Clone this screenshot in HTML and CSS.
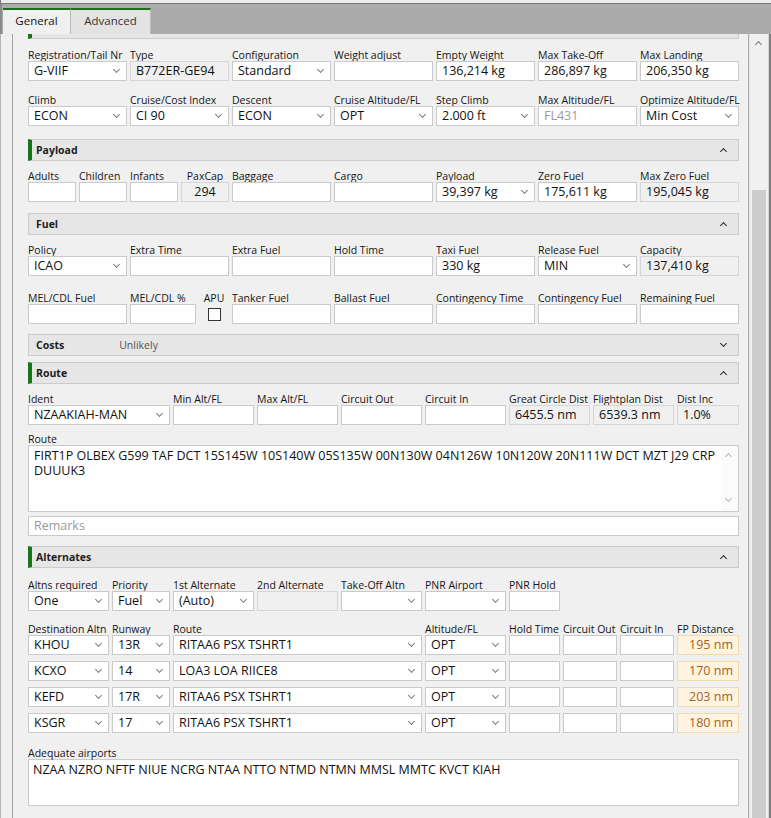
FILE: index.html
```html
<!DOCTYPE html>
<html lang="en">
<head>
    <meta charset="UTF-8">
    <title>Flight Plan - General</title>
    <link rel="stylesheet" href="styles.css">
</head>
<body>
<div class="window">
    <div class="topline"></div>
    <div class="tabbar">
        <div class="tab active">General</div>
        <div class="tab">Advanced</div>
    </div>

    <div class="frame">
        <div class="gutter"></div>
        <div class="scroller">
            <div class="content">
                <div class="section-head cut open"></div>

                <!-- Aircraft -->
                <div class="row r7 first">
                    <div class="fld"><label>Registration/Tail Nr</label><div class="box combo">G-VIIF</div></div>
                    <div class="fld"><label>Type</label><div class="box ro">B772ER-GE94</div></div>
                    <div class="fld"><label>Configuration</label><div class="box combo">Standard</div></div>
                    <div class="fld"><label>Weight adjust</label><div class="box"></div></div>
                    <div class="fld"><label>Empty Weight</label><div class="box">136,214 kg</div></div>
                    <div class="fld"><label>Max Take-Off</label><div class="box">286,897 kg</div></div>
                    <div class="fld"><label>Max Landing</label><div class="box">206,350 kg</div></div>
                </div>
                <div class="row r7 m12">
                    <div class="fld"><label>Climb</label><div class="box combo">ECON</div></div>
                    <div class="fld"><label>Cruise/Cost Index</label><div class="box combo">CI 90</div></div>
                    <div class="fld"><label>Descent</label><div class="box combo">ECON</div></div>
                    <div class="fld"><label>Cruise Altitude/FL</label><div class="box combo">OPT</div></div>
                    <div class="fld"><label>Step Climb</label><div class="box combo">2.000 ft</div></div>
                    <div class="fld"><label>Max Altitude/FL</label><div class="box dim">FL431</div></div>
                    <div class="fld"><label>Optimize Altitude/FL</label><div class="box combo">Min Cost</div></div>
                </div>

                <!-- Payload -->
                <div class="section-head open m13"><span class="title">Payload</span></div>
                <div class="row payload m8">
                    <div class="fld"><label>Adults</label><div class="box"></div></div>
                    <div class="fld"><label>Children</label><div class="box"></div></div>
                    <div class="fld"><label>Infants</label><div class="box"></div></div>
                    <div class="fld"><label class="center">PaxCap</label><div class="box ro center">294</div></div>
                    <div class="fld"><label>Baggage</label><div class="box"></div></div>
                    <div class="fld"><label>Cargo</label><div class="box"></div></div>
                    <div class="fld"><label>Payload</label><div class="box combo">39,397 kg</div></div>
                    <div class="fld"><label>Zero Fuel</label><div class="box">175,611 kg</div></div>
                    <div class="fld"><label>Max Zero Fuel</label><div class="box ro">195,045 kg</div></div>
                </div>

                <!-- Fuel -->
                <div class="section-head plain m11"><span class="title">Fuel</span></div>
                <div class="row r7 m8">
                    <div class="fld"><label>Policy</label><div class="box combo">ICAO</div></div>
                    <div class="fld"><label>Extra Time</label><div class="box"></div></div>
                    <div class="fld"><label>Extra Fuel</label><div class="box"></div></div>
                    <div class="fld"><label>Hold Time</label><div class="box"></div></div>
                    <div class="fld"><label>Taxi Fuel</label><div class="box">330 kg</div></div>
                    <div class="fld"><label>Release Fuel</label><div class="box combo">MIN</div></div>
                    <div class="fld"><label>Capacity</label><div class="box ro">137,410 kg</div></div>
                </div>
                <div class="row fuel2 m15">
                    <div class="fld"><label>MEL/CDL Fuel</label><div class="box"></div></div>
                    <div class="fld"><label>MEL/CDL %</label><div class="box"></div></div>
                    <div class="fld apu"><label>APU</label><span class="check"></span></div>
                    <div class="fld"><label>Tanker Fuel</label><div class="box"></div></div>
                    <div class="fld"><label>Ballast Fuel</label><div class="box"></div></div>
                    <div class="fld"><label>Contingency Time</label><div class="box"></div></div>
                    <div class="fld"><label>Contingency Fuel</label><div class="box"></div></div>
                    <div class="fld"><label>Remaining Fuel</label><div class="box"></div></div>
                </div>

                <!-- Costs -->
                <div class="section-head plain closed m10"><span class="title">Costs</span><span class="note">Unlikely</span></div>

                <!-- Route -->
                <div class="section-head open m6"><span class="title">Route</span></div>
                <div class="row route m8">
                    <div class="fld"><label>Ident</label><div class="box combo">NZAAKIAH-MAN</div></div>
                    <div class="fld"><label>Min Alt/FL</label><div class="box"></div></div>
                    <div class="fld"><label>Max Alt/FL</label><div class="box"></div></div>
                    <div class="fld"><label>Circuit Out</label><div class="box"></div></div>
                    <div class="fld"><label>Circuit In</label><div class="box"></div></div>
                    <div class="fld"><label>Great Circle Dist</label><div class="box ro">6455.5 nm</div></div>
                    <div class="fld"><label>Flightplan Dist</label><div class="box ro">6539.3 nm</div></div>
                    <div class="fld"><label>Dist Inc</label><div class="box ro">1.0%</div></div>
                </div>
                <div class="fld m7">
                    <label>Route</label>
                    <div class="area route-text">
                        <div class="area-text">FIRT1P OLBEX G599 TAF DCT 15S145W 10S140W 05S135W 00N130W 04N126W 10N120W 20N111W DCT MZT J29 CRP DUUUK3</div>
                        <div class="area-scroll"><span class="arrow up"></span><span class="arrow down"></span></div>
                    </div>
                </div>
                <div class="box remarks">Remarks</div>

                <!-- Alternates -->
                <div class="section-head open m10"><span class="title">Alternates</span></div>
                <div class="row altn m10">
                    <div class="fld"><label>Altns required</label><div class="box combo">One</div></div>
                    <div class="fld"><label>Priority</label><div class="box combo">Fuel</div></div>
                    <div class="fld"><label>1st Alternate</label><div class="box combo">(Auto)</div></div>
                    <div class="fld"><label>2nd Alternate</label><div class="box ro"></div></div>
                    <div class="fld"><label>Take-Off Altn</label><div class="box combo"></div></div>
                    <div class="fld"><label>PNR Airport</label><div class="box combo"></div></div>
                    <div class="fld"><label>PNR Hold</label><div class="box"></div></div>
                </div>

                <div class="row dest m11">
                    <label>Destination Altn</label><label>Runway</label><label>Route</label><label>Altitude/FL</label>
                    <label>Hold Time</label><label>Circuit Out</label><label>Circuit In</label><label>FP Distance</label>
                </div>
                <div class="row dest">
                    <div class="box combo">KHOU</div><div class="box combo">13R</div><div class="box combo">RITAA6 PSX TSHRT1</div><div class="box combo">OPT</div>
                    <div class="box"></div><div class="box"></div><div class="box"></div><div class="box dist">195 nm</div>
                </div>
                <div class="row dest m6">
                    <div class="box combo">KCXO</div><div class="box combo">14</div><div class="box combo">LOA3 LOA RIICE8</div><div class="box combo">OPT</div>
                    <div class="box"></div><div class="box"></div><div class="box"></div><div class="box dist">170 nm</div>
                </div>
                <div class="row dest m6">
                    <div class="box combo">KEFD</div><div class="box combo">17R</div><div class="box combo">RITAA6 PSX TSHRT1</div><div class="box combo">OPT</div>
                    <div class="box"></div><div class="box"></div><div class="box"></div><div class="box dist">203 nm</div>
                </div>
                <div class="row dest m6">
                    <div class="box combo">KSGR</div><div class="box combo">17</div><div class="box combo">RITAA6 PSX TSHRT1</div><div class="box combo">OPT</div>
                    <div class="box"></div><div class="box"></div><div class="box"></div><div class="box dist">180 nm</div>
                </div>

                <div class="fld m13">
                    <label>Adequate airports</label>
                    <div class="area airports">NZAA NZRO NFTF NIUE NCRG NTAA NTTO NTMD NTMN MMSL MMTC KVCT KIAH</div>
                </div>
            </div>
        </div>
        <div class="vscroll">
            <span class="arrow up"></span>
            <div class="thumb"></div>
        </div>
        <div class="edge"></div>
    </div>
</div>
</body>
</html>
```

FILE: styles.css
```css
* {
    margin: 0;
    padding: 0;
    box-sizing: border-box;
}

body {
    font-family: 'Open Sans', 'Noto Sans', sans-serif;
    font-size: 10.5px;
    color: #1b1b1b;
    background: #f0f0f0;
}

.window {
    width: 771px;
    height: 818px;
    overflow: hidden;
    display: flex;
    flex-direction: column;
}

.topline {
    height: 4px;
    background: #ececec;
    border-bottom: 1px solid #7a7a7a;
    border-left: 1px solid #7a7a7a;
}

.tabbar {
    height: 30px;
    background: #ababab;
    border-left: 2px solid #8c8c8c;
    display: flex;
    align-items: flex-end;
    padding-left: 1px;
}

.tab {
    width: 80px;
    height: 26px;
    border-top: 2px solid #1c6d1c;
    background: #e3e3e3;
    border-right: 1px solid #bcbcbc;
    font-size: 11.5px;
    line-height: 22px;
    color: #333;
    text-align: center;
}

.tab.active {
    width: 68px;
    background: #f0f0f0;
    height: 27px;
    margin-bottom: -1px;
    color: #111;
}

.frame {
    flex: 1;
    display: flex;
    min-height: 0;
}

.gutter {
    width: 12px;
    background: #f0f0f0;
    border-left: 1px solid #b5b5b5;
}

.scroller {
    width: 737px;
    border-left: 1px solid #a3a3a3;
    border-right: 1px solid #a9a9a9;
    background: #f0f0f0;
    overflow: hidden;
}

.content {
    padding-left: 15px;
    width: 727px;
}

.vscroll {
    width: 19px;
    background: #f0f0f0;
    position: relative;
    border-left: 1px solid #e4e4e4;
}

.vscroll .arrow {
    position: absolute;
    top: 8px;
    left: 6px;
}

.vscroll .thumb {
    position: absolute;
    left: 2px;
    right: 2px;
    top: 156px;
    bottom: 0;
    background: #cdcdcd;
}

.edge {
    width: 3px;
    background: #7d7d7d;
    border-left: 1px solid #dadada;
}

/* sections */
.section-head {
    height: 22px;
    background: #e6e6e6;
    border: 1px solid #cbcbcb;
    display: flex;
    align-items: center;
    position: relative;
    width: 711px;
}

.section-head .title {
    font-weight: bold;
    font-size: 10.5px;
    padding-left: 7px;
    color: #1e1e1e;
}

.section-head .note {
    margin-left: 55px;
    color: #555;
    font-size: 10.5px;
}

.section-head.open {
    border-left: 4px solid #177617;
}

.section-head.open .title {
    padding-left: 4px;
}

.section-head::after {
    content: '';
    position: absolute;
    right: 12px;
    top: 9px;
    width: 4px;
    height: 4px;
    border-left: 1.5px solid #2a2a2a;
    border-top: 1.5px solid #2a2a2a;
    transform: rotate(45deg);
}

.section-head.closed::after {
    top: 6px;
    transform: rotate(225deg);
}

.section-head.cut {
    margin-top: -17px;
}

/* rows */
.row {
    display: grid;
    column-gap: 3px;
    width: 711px;
}

.r7 { grid-template-columns: repeat(7, 99px); }
.payload { grid-template-columns: 48px 48px 48px 48px repeat(5, 99px); }
.fuel2 { grid-template-columns: 99px 66px 30px repeat(5, 99px); }
.route { grid-template-columns: 142px repeat(6, 81px) 62px; }
.altn { grid-template-columns: 81px 58px 81px 81px 81px 81px 51px; }
.dest { grid-template-columns: 81px 58px 249px 81px 51px 54px 54px 62px; }

.first { margin-top: 9px; }
.m6 { margin-top: 6px; }
.m7 { margin-top: 7px; }
.m8 { margin-top: 8px; }
.m10 { margin-top: 10px; }
.m11 { margin-top: 11px; }
.m12 { margin-top: 12px; }
.m13 { margin-top: 13px; }
.m15 { margin-top: 15px; }

label {
    display: block;
    height: 13px;
    line-height: 15px;
    white-space: nowrap;
    font-size: 10.5px;
    color: #151515;
}

label.center {
    text-align: center;
}

.box {
    height: 20px;
    border: 1px solid #cacaca;
    background: #fff;
    font-size: 12.5px;
    line-height: 18px;
    padding: 0 5px;
    white-space: nowrap;
    overflow: hidden;
    position: relative;
    color: #111;
}

.box.ro {
    background: #f0f0f0;
    border-color: #d6d6d6;
}

.box.dim {
    color: #9b9b9b;
}

.box.center {
    text-align: center;
}

.box.combo::after {
    content: '';
    position: absolute;
    right: 7px;
    top: 5px;
    width: 4px;
    height: 4px;
    border-right: 1px solid #7b7b7b;
    border-bottom: 1px solid #7b7b7b;
    transform: rotate(45deg);
}

.box.dist {
    background: #fff4df;
    border-color: #f2d9aa;
    color: #a5602c;
    text-align: right;
}

.apu {
    display: flex;
    flex-direction: column;
    align-items: center;
}

.check {
    margin-top: 4px;
    width: 13px;
    height: 13px;
    border: 1px solid #333;
    background: #fff;
}

/* text areas */
.area {
    width: 711px;
    border: 1px solid #cacaca;
    background: #fff;
    font-size: 12.5px;
    line-height: 15px;
    color: #111;
}

.route-text {
    height: 67px;
    display: flex;
}

.area-text {
    flex: 1;
    padding: 2px 5px;
}

.area-scroll {
    width: 17px;
    position: relative;
    background: #fbfbfb;
}

.area-scroll .arrow {
    position: absolute;
    left: 5px;
}

.area-scroll .up { top: 8px; }
.area-scroll .down { bottom: 10px; }

.arrow {
    width: 5px;
    height: 5px;
    border-left: 1px solid #b8b8b8;
    border-top: 1px solid #b8b8b8;
    transform: rotate(45deg);
    display: block;
}

.arrow.down {
    transform: rotate(225deg);
}

.vscroll .arrow {
    border-color: #777;
}

.remarks {
    margin-top: 4px;
    width: 711px;
    color: #9a9a9a;
}

.airports {
    height: 47px;
    padding: 2px 4px;
}
```
